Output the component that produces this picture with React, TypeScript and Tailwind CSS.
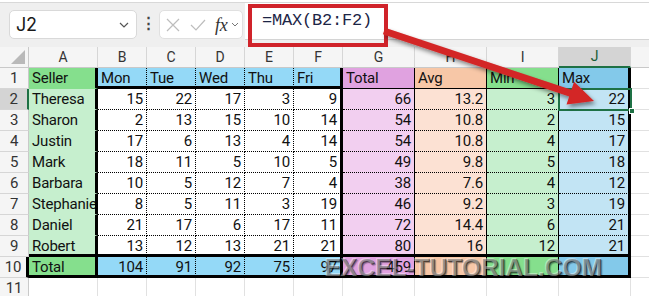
import clsx from "clsx";

type Side = "none" | "grid" | "thin" | "dot" | "thick";

const RIGHT: Record<Side, string> = {
  none: "border-r border-r-transparent",
  grid: "border-r border-r-[#e1e1e1]",
  thin: "border-r border-r-black",
  dot: "border-r border-r-black [border-right-style:dotted]!",
  thick: "border-r-[3px] border-r-black",
};

const BOTTOM: Record<Side, string> = {
  none: "border-b border-b-transparent",
  grid: "border-b border-b-[#e1e1e1]",
  thin: "border-b border-b-black",
  dot: "border-b border-b-black [border-bottom-style:dotted]!",
  thick: "border-b-[3px] border-b-black",
};

const WIDTHS = [
  "w-[69px]",
  "w-[49px]",
  "w-[49px]",
  "w-[49px]",
  "w-[49px]",
  "w-[49px]",
  "w-[72px]",
  "w-[72px]",
  "w-[72px]",
  "w-[72px]",
];

const LETTERS = ["A", "B", "C", "D", "E", "F", "G", "H", "I", "J"];

const HEAD_BG = [
  "bg-[#85df8d]",
  "bg-[#94d9f7]",
  "bg-[#94d9f7]",
  "bg-[#94d9f7]",
  "bg-[#94d9f7]",
  "bg-[#94d9f7]",
  "bg-[#e0a2e0]",
  "bg-[#f7c7a7]",
  "bg-[#85df8d]",
  "bg-[#83c9ea]",
];

const BODY_BG = [
  "bg-[#c6efce]",
  "bg-white",
  "bg-white",
  "bg-white",
  "bg-white",
  "bg-white",
  "bg-[#f2cff0]",
  "bg-[#fce1d3]",
  "bg-[#c6efce]",
  "bg-[#c2e4f4]",
];

const ROWS: string[][] = [
  ["Seller", "Mon", "Tue", "Wed", "Thu", "Fri", "Total", "Avg", "Min", "Max"],
  ["Theresa", "15", "22", "17", "3", "9", "66", "13.2", "3", "22"],
  ["Sharon", "2", "13", "15", "10", "14", "54", "10.8", "2", "15"],
  ["Justin", "17", "6", "13", "4", "14", "54", "10.8", "4", "17"],
  ["Mark", "18", "11", "5", "10", "5", "49", "9.8", "5", "18"],
  ["Barbara", "10", "5", "12", "7", "4", "38", "7.6", "4", "12"],
  ["Stephanie", "8", "5", "11", "3", "19", "46", "9.2", "3", "19"],
  ["Daniel", "21", "17", "6", "17", "11", "72", "14.4", "6", "21"],
  ["Robert", "13", "12", "13", "21", "21", "80", "16", "12", "21"],
  ["Total", "104", "91", "92", "75", "97", "459", "", "", ""],
];

function rightSide(col: number): Side {
  if (col === 0 || col === 5 || col === 9) return "thick";
  if (col >= 1 && col <= 4) return "dot";
  return "thin";
}

function bottomSide(row: number, col: number): Side {
  if (row >= 9) return "thick";
  if (row === 1) {
    if (col === 0) return "none";
    return col <= 5 ? "thick" : "thin";
  }
  return col === 0 ? "none" : "dot";
}

function NameBox() {
  return (
    <div className="ml-[9px] mt-[7px] flex h-[29px] w-[128px] items-center justify-between rounded-[5px] border border-[#d9d9d9] bg-white pl-[6px] pr-[7px]">
      <span className="font-['Inter',sans-serif] text-[18px] text-[#1a1a1a]">J2</span>
      <svg width="10" height="6" viewBox="0 0 10 6">
        <path d="M1 1l4 4 4-4" fill="none" stroke="#555" strokeWidth="1.2" />
      </svg>
    </div>
  );
}

function FormulaButtons() {
  return (
    <div className="mt-[7px] flex h-[29px] w-[84px] items-center rounded-[5px] border border-[#e0e0e0] bg-white pl-[6px]">
      <svg width="14" height="14" viewBox="0 0 14 14">
        <path d="M1 1l12 12M13 1L1 13" stroke="#bdbdbd" strokeWidth="1.2" />
      </svg>
      <svg className="ml-[10px]" width="16" height="12" viewBox="0 0 16 12">
        <path d="M1 6l5 5L15 1" fill="none" stroke="#bdbdbd" strokeWidth="1.2" />
      </svg>
      <span className="ml-[9px] font-['Liberation_Serif',serif] text-[18px] italic leading-none text-[#333]">fx</span>
      <svg className="ml-[3px]" width="8" height="5" viewBox="0 0 8 5">
        <path d="M1 1l3 3 3-3" fill="none" stroke="#777" strokeWidth="1" />
      </svg>
    </div>
  );
}

function TopBar() {
  return (
    <div className="flex h-[47px] flex-col bg-[#efefef]">
      <div className="h-[3px] border-b border-[#d8d8d8] bg-white" />
      <div className="flex flex-1">
        <NameBox />
        <div className="flex w-[22px] items-center justify-center pb-[4px] text-[15px] font-bold text-[#444]">⋮</div>
        <FormulaButtons />
        <div className="ml-[2px] flex h-[37px] flex-1 items-center border-b border-[#d4d4d4] bg-white pl-[17px]">
          <span className="font-['Liberation_Mono',monospace] text-[17px] text-[#1c2546]">=MAX(B2:F2)</span>
        </div>
      </div>
    </div>
  );
}

function ColumnHeaders() {
  return (
    <div className="flex h-[21px] bg-[#f5f5f5] text-[14px] text-[#333]">
      <div className="flex w-[29px] shrink-0 items-end justify-end border-r border-b border-[#c9c9c9] pb-[3px] pr-[3px]">
        <svg width="14" height="14" viewBox="0 0 14 14">
          <path d="M14 0L14 14L0 14Z" fill="#b9b9b9" />
        </svg>
      </div>
      {LETTERS.map((l, i) => (
        <div
          key={l}
          className={clsx(
            "flex shrink-0 items-center justify-center border-r border-r-[#d6d6d6]",
            WIDTHS[i],
            i === 9
              ? "border-b-2 border-b-[#1e7145] bg-[#d4d4d4] text-[#185c37]"
              : "border-b border-b-[#c9c9c9]"
          )}
        >
          {l}
        </div>
      ))}
      <div className="flex-1 border-b border-b-[#c9c9c9]" />
    </div>
  );
}

function RowHeader({ n }: { n: number }) {
  return (
    <div
      className={clsx(
        "flex h-[21px] w-[29px] shrink-0 items-center justify-center border-b border-b-[#d6d6d6] text-[15px] text-[#333]",
        n === 2
          ? "border-r-2 border-r-[#1e7145] bg-[#d4d4d4]"
          : n === 10
            ? "border-r-[3px] border-r-black bg-[#f5f5f5]"
            : "border-r border-r-[#c9c9c9] bg-[#f5f5f5]"
      )}
    >
      {n}
    </div>
  );
}

function DataRow({ row }: { row: number }) {
  const values = ROWS[row - 1];
  const isHead = row === 1 || row === 10;
  return (
    <div className="flex h-[21px]">
      <RowHeader n={row} />
      {values.map((v, col) => {
        const numeric = row > 1 && col > 0;
        return (
          <div
            key={col}
            className={clsx(
              "relative h-[21px] shrink-0 overflow-hidden whitespace-nowrap px-[3px] leading-[20px]",
              WIDTHS[col],
              isHead ? HEAD_BG[col] : BODY_BG[col],
              RIGHT[rightSide(col)],
              BOTTOM[bottomSide(row, col)],
              numeric ? "text-right" : "text-left"
            )}
          >
            {v}
          </div>
        );
      })}
      <div className="h-[21px] flex-1 border-b border-b-[#e1e1e1]" />
    </div>
  );
}

function Arrow() {
  return (
    <svg className="pointer-events-none absolute left-0 top-0" width="649" height="296" viewBox="0 0 649 296">
      <defs>
        <filter id="sh" x="-10%" y="-10%" width="130%" height="140%">
          <feDropShadow dx="2" dy="3" stdDeviation="2" floodColor="#000" floodOpacity="0.45" />
        </filter>
      </defs>
      <polygon
        points="385.1,27.7 571.4,89.8 574.1,81.7 594,101 566.5,104.5 569.2,96.4 382.9,34.3"
        fill="#d32626"
        filter="url(#sh)"
      />
    </svg>
  );
}

export default function App() {
  return (
    <div className="relative h-[296px] w-[649px] overflow-hidden bg-white font-[Roboto,sans-serif] text-[15px] tracking-[-0.2px] text-[#111]">
      <TopBar />
      <ColumnHeaders />
      {Array.from({ length: 10 }, (_, i) => (
        <DataRow key={i} row={i + 1} />
      ))}
      <div className="flex h-[21px]">
        <RowHeader n={11} />
        {WIDTHS.map((w, i) => (
          <div key={i} className={clsx("h-[21px] shrink-0 border-r border-b border-[#e1e1e1]", w)} />
        ))}
        <div className="flex-1 border-b border-[#e1e1e1]" />
      </div>

      {/* active cell J2 */}
      <div className="pointer-events-none absolute left-[558px] top-[88px] h-[23px] w-[74px] border-2 border-[#1e7145]" />
      <div className="pointer-events-none absolute left-[629px] top-[108px] h-[6px] w-[6px] border border-white bg-[#1e7145]" />

      {/* formula highlight */}
      <div className="pointer-events-none absolute left-[248px] top-[4px] h-[43px] w-[140px] border-4 border-[#d0232a]" />
      <Arrow />

      <div className="pointer-events-none absolute left-[324px] top-[253px] font-['Liberation_Sans',Arial,sans-serif] text-[25px] font-bold leading-[28px] tracking-[-0.3px] text-white/40 [text-shadow:1px_1px_0_rgba(0,0,0,0.5),2px_2px_1px_rgba(0,0,0,0.35)]">
        EXCEL-TUTORIAL.COM
      </div>
    </div>
  );
}
